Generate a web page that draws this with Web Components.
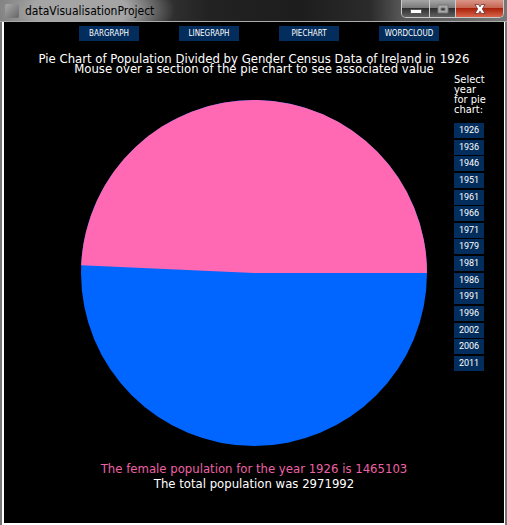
<!DOCTYPE html>
<html lang="en">
<head>
<meta charset="utf-8">
<title>dataVisualisationProject</title>
<style>
html, body { margin: 0; height: 100%; background: #777; }
body { font-family: "DejaVu Sans Condensed", "DejaVu Sans", sans-serif; color: #fff; }
</style>
</head>
<body>
<app-window label="dataVisualisationProject">
  <chart-nav slot="nav"></chart-nav>
  <chart-heading slot="heading">
    <span>Pie Chart of Population Divided by Gender Census Data of Ireland in 1926</span>
    <span slot="hint">Mouse over a section of the pie chart to see associated value</span>
  </chart-heading>
  <pie-chart slot="chart" female="1465103" total="2971992"></pie-chart>
  <year-picker slot="years">Select year for&nbsp;pie chart:</year-picker>
  <chart-status slot="status">
    <span>The female population for the year 1926 is 1465103</span>
    <span slot="total">The total population was 2971992</span>
  </chart-status>
</app-window>
<script>
const define = (name, html, setup) => {
  const template = document.createElement('template');
  template.innerHTML = html;
  customElements.define(name, class extends HTMLElement {
    constructor() {
      super();
      this.attachShadow({ mode: 'open' }).append(template.content.cloneNode(true));
    }
    connectedCallback() { if (setup) setup(this, this.shadowRoot); }
  });
};

define('small-button', `
<style>
:host { display: block; width: 60px; height: 15px; }
button { display: block; width: 100%; height: 100%; border: 0; padding: 0; background: #022d5c; color: #fff;
  font: 8px/15px "DejaVu Sans Condensed", Roboto, sans-serif; text-align: center; white-space: nowrap; cursor: pointer; }
:host([year]) { width: 30px; }
:host([year]) button { font: 9px/15px Roboto, sans-serif; }
button:hover { background: #0a5a9c; }
</style>
<button type="button"><slot></slot></button>`);

define('chart-nav', `
<style>
:host { display: block; }
nav { display: flex; justify-content: space-between; width: 72%; margin-left: 15%; }
</style>
<nav aria-label="Charts">
<small-button>BARGRAPH</small-button><small-button>LINEGRAPH</small-button><small-button>PIECHART</small-button><small-button>WORDCLOUD</small-button>
</nav>`);

define('chart-heading', `
<style>
:host { display: block; text-align: center; }
h1, p { margin: 0; font-size: 13px; line-height: 10px; font-weight: 400; white-space: nowrap; }
</style>
<h1><slot></slot></h1><p><slot name="hint"></slot></p>`);

define('pie-chart', `
<style>
:host { display: block; }
svg { display: block; width: 100%; }
</style>
<svg viewBox="-173 -173 346 346" role="img" aria-label="Population by gender">
<circle r="173" fill="#0066ff"></circle><path fill="#ff69b4"></path>
</svg>`, (host, root) => {
  const angle = 2 * Math.PI * host.getAttribute('female') / host.getAttribute('total');
  const x = 173 * Math.cos(angle), y = -173 * Math.sin(angle);
  root.querySelector('path').setAttribute('d', `M0 0H173A173 173 0 0 0 ${x} ${y}Z`);
});

define('year-picker', `
<style>
:host { display: block; width: 36px; }
p { margin: 0 0 8px; font-size: 11px; line-height: 10px; }
div { display: flex; flex-direction: column; justify-content: space-between; height: 248px; }
</style>
<p id="label"><slot></slot></p><div role="group" aria-labelledby="label"></div>`, (host, root) => {
  const years = [1926, 1936, 1946, 1951, 1961, 1966, 1971, 1979, 1981, 1986, 1991, 1996, 2002, 2006, 2011];
  root.querySelector('div').replaceChildren(...years.map(year => {
    const button = document.createElement('small-button');
    button.setAttribute('year', '');
    button.textContent = year;
    return button;
  }));
});

define('chart-status', `
<style>
:host { display: block; text-align: center; }
p { margin: 0; font-size: 13px; line-height: 15px; }
.female { color: #ec62a6; }
</style>
<p class="female"><slot></slot></p><p><slot name="total"></slot></p>`);

define('window-controls', `
<style>
:host { display: flex; align-self: flex-start; height: 18px; box-sizing: border-box; border: 1px solid #c9c9c9; border-top: 0; border-radius: 0 0 5px 5px; overflow: hidden; }
button { display: grid; place-items: center; border: 0; border-right: 1px solid #ccc; padding: 0; width: 28px;
  background: linear-gradient(#a5a5a5, #777 50%, #2e2e2e 50%, #626262); }
.maximize { width: 26px; }
.close { width: 47px; border: 0; background: linear-gradient(#d99687, #c5604b 50%, #a92209 50%, #d8644a); }
svg { display: block; }
</style>
<button type="button" aria-label="Minimize"><svg width="14" height="12"><rect x="1.5" y="6.5" width="11" height="4" rx="1" fill="#fff" stroke="#555"/></svg></button>
<button type="button" aria-label="Maximize" class="maximize" disabled><svg width="14" height="12"><path d="M2 2H12V10H2ZM5 5V7.500H9V5Z" fill="#aaa" fill-rule="evenodd" stroke="#777"/></svg></button>
<button type="button" aria-label="Close" class="close"><svg width="14" height="12"><path d="M2 1.500H5.500L7 3.800 8.500 1.500H12L9.300 6 12 10.500H8.500L7 8.200 5.500 10.500H2L4.700 6Z" fill="#fff" stroke="#633" stroke-width=".8"/></svg></button>`);

define('app-window', `
<style>
:host { display: flex; flex-direction: column; min-height: 100%; box-sizing: border-box; }
header { display: flex; align-items: center; height: 21px; padding: 0 3px 0 5px; border-bottom: 1px solid #aaa;
  background: radial-gradient(ellipse 95px 40px at 80px 10px, #a5a5a5 0 50%, transparent 100%), linear-gradient(90deg, #777, #333 160px, #222 210px, #1d1d1d 300px, #2b2b2b 370px, #555 400px, #777); }
.icon { width: 14px; height: 14px; border-radius: 2px; background: linear-gradient(135deg, #aaa, #666); }
.title { flex: 1; margin-left: 6px; font-size: 12px; line-height: 20px; color: #000; }
main { flex: 1; display: grid; grid-template-columns: 77fr 346fr 77fr; grid-template-rows: auto auto auto 1fr; padding-top: 4px;
  margin: 0 2px; border: 2px solid #fff; border-top: 0; border-right-width: 1px; background: #000; }
.nav, .heading, .status { grid-column: 1 / -1; }
.heading { margin-top: 13px; }
.chart { grid-column: 2; grid-row: 3; margin-top: 26px; }
.years { grid-column: 3; grid-row: 3; margin: 1px 0 0 27px; height: 0; }
.status { margin-top: 15px; }
</style>
<header><span class="icon"></span><span class="title"></span><window-controls></window-controls></header>
<main>
<div class="nav"><slot name="nav"></slot></div>
<div class="heading"><slot name="heading"></slot></div>
<div class="chart"><slot name="chart"></slot></div>
<div class="years"><slot name="years"></slot></div>
<div class="status"><slot name="status"></slot></div>
</main>`, (host, root) => {
  root.querySelector('.title').textContent = host.getAttribute('label');
});
</script>
</body>
</html>
